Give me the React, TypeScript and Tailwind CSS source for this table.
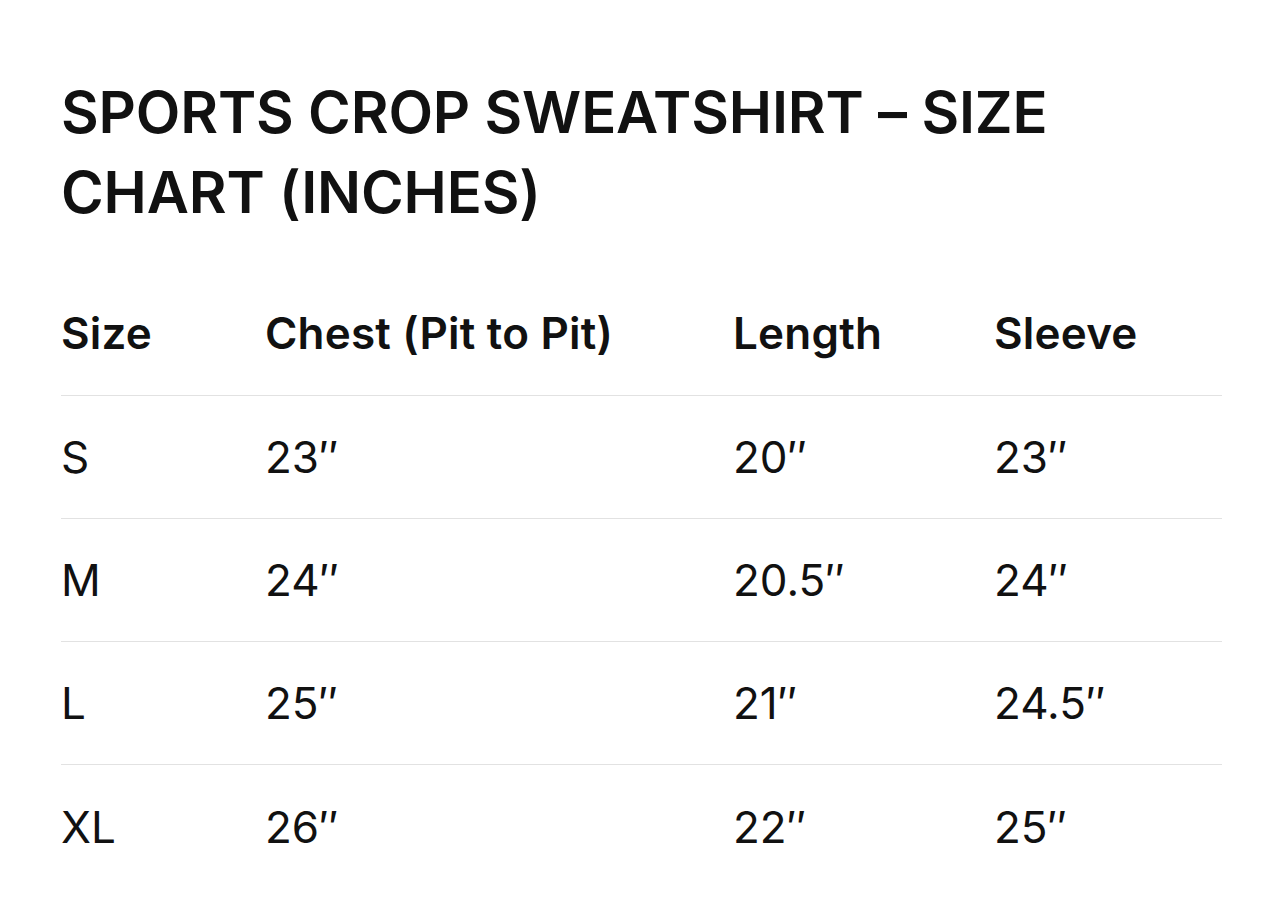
import React from 'react';

const rows = [
   { size: 'S', chest: '23″', length: '20″', sleeve: '23″' },
   { size: 'M', chest: '24″', length: '20.5″', sleeve: '24″' },
   { size: 'L', chest: '25″', length: '21″', sleeve: '24.5″' },
   { size: 'XL', chest: '26″', length: '22″', sleeve: '25″' },
];

const cols = 'grid grid-cols-[204px_468px_261px_227px]';

export default function App() {
   return (
      <div
         className="w-[1284px] h-[921px] bg-white text-[#111111] pl-[61px] pr-[62px] pt-[72px]"
         style={{ fontFamily: 'Inter, "Noto Sans", sans-serif' }}
      >
         <h1 className="text-[58px] leading-[80px] font-semibold tracking-[-0.15px] max-w-[1000px]">
            SPORTS CROP SWEATSHIRT – SIZE CHART (INCHES)
         </h1>
         <div className="mt-[39px] w-[1161px]">
            <div
               className={`${cols} h-[125px] items-center border-b border-[#e2e2e2] text-[44px] font-semibold tracking-[0.2px]`}
            >
               <div>Size</div>
               <div>Chest (Pit to Pit)</div>
               <div>Length</div>
               <div>Sleeve</div>
            </div>
            {rows.map((r, i) => (
               <div
                  key={r.size}
                  className={`${cols} h-[123px] items-center text-[44px] ${
                     i < rows.length - 1 ? 'border-b border-[#e2e2e2]' : ''
                  }`}
               >
                  <div>{r.size}</div>
                  <div>{r.chest}</div>
                  <div>{r.length}</div>
                  <div>{r.sleeve}</div>
               </div>
            ))}
         </div>
      </div>
   );
}
